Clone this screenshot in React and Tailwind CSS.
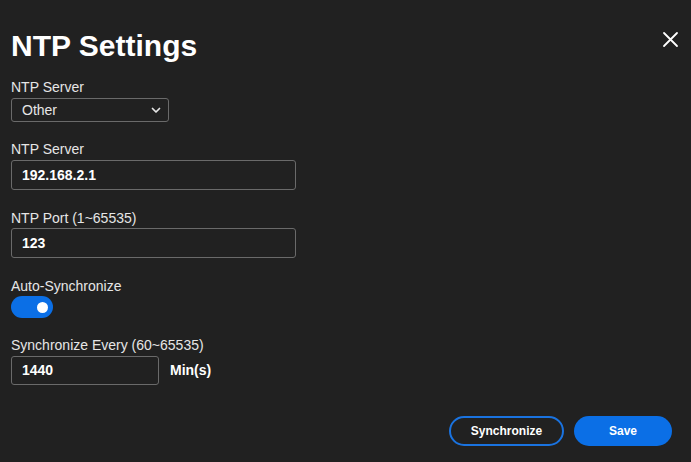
export default function App() {
  return (
    <div
      className="w-[691px] h-[462px] bg-[#212121] text-[#e6e6e6] relative overflow-hidden"
      style={{ fontFamily: '"Liberation Sans", Arial, sans-serif' }}
    >
      <button className="absolute left-[660px] top-[29px] w-[20px] h-[20px] flex items-center justify-center text-white">
        <svg width="17" height="17" viewBox="0 0 17 17" fill="none" stroke="currentColor" strokeWidth="1.8" strokeLinecap="round">
          <path d="M2 2L15 15M15 2L2 15" />
        </svg>
      </button>

      <div className="pl-[11px] pt-[28px] flex flex-col">
        <h1 className="text-[30px] font-bold text-white leading-[36px]">NTP Settings</h1>

        <label className="mt-[15px] text-[14px] leading-[16px]">NTP Server</label>
        <div className="mt-[3px] w-[158px] h-[24px] border border-[#6a6a6a] rounded-[3px] flex items-center justify-between pl-[10px] pr-[6px] text-[14px]">
          <span>Other</span>
          <svg width="12" height="12" viewBox="0 0 12 12" fill="none" stroke="currentColor" strokeWidth="1.7" strokeLinecap="round" strokeLinejoin="round">
            <path d="M2.5 4.5L6 8L9.5 4.5" />
          </svg>
        </div>

        <label className="mt-[19px] text-[14px] leading-[16px]">NTP Server</label>
        <div className="mt-[3px] w-[285px] h-[30px] border border-[#6a6a6a] rounded-[3px] flex items-center pl-[10px] text-[14px] font-bold text-white">
          192.168.2.1
        </div>

        <label className="mt-[20px] text-[14px] leading-[16px]">NTP Port (1~65535)</label>
        <div className="mt-[2px] w-[285px] h-[30px] border border-[#6a6a6a] rounded-[3px] flex items-center pl-[10px] text-[14px] font-bold text-white">
          123
        </div>

        <label className="mt-[20px] text-[14px] leading-[16px]">Auto-Synchronize</label>
        <div className="mt-[2px] w-[42px] h-[22px] rounded-full bg-[#0b6fe6] flex items-center justify-end pr-[5px]">
          <div className="w-[11px] h-[11px] rounded-full bg-white" />
        </div>

        <label className="mt-[19px] text-[14px] leading-[16px]">Synchronize Every (60~65535)</label>
        <div className="mt-[3px] flex items-center gap-[11px]">
          <div className="w-[148px] h-[29px] border border-[#6a6a6a] rounded-[3px] flex items-center pl-[10px] text-[14px] font-bold text-white">
            1440
          </div>
          <span className="text-[14px] font-bold text-white">Min(s)</span>
        </div>
      </div>

      <div className="absolute right-[19px] top-[416px] flex gap-[10px]">
        <button className="w-[115px] h-[30px] rounded-full border-2 border-[#1a73e0] text-[12px] font-bold text-white">
          Synchronize
        </button>
        <button className="w-[98px] h-[30px] rounded-full bg-[#0b6fe6] text-[12px] font-bold text-white">
          Save
        </button>
      </div>
    </div>
  );
}
